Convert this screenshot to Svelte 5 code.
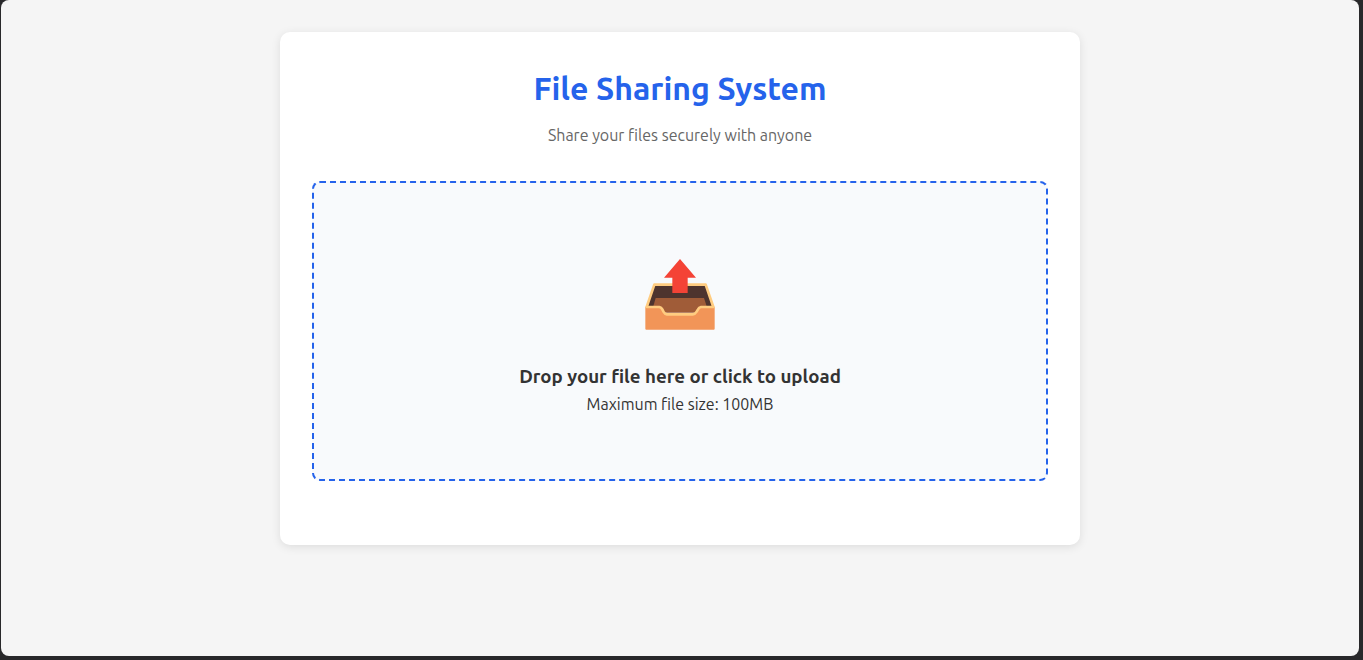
<script>
  let dragging = $state(false);

  function onDragOver(event) {
    event.preventDefault();
    dragging = true;
  }

  function onDrop(event) {
    event.preventDefault();
    dragging = false;
  }
</script>

<div class="page">
  <main class="card">
    <header>
      <h1>File Sharing System</h1>
      <p>Share your files securely with anyone</p>
    </header>

    <div
      class="dropzone"
      class:dragging
      role="group"
      ondragover={onDragOver}
      ondragleave={() => (dragging = false)}
      ondrop={onDrop}
    >
      <svg class="tray" viewBox="45 27 210 216" aria-hidden="true">
        <path d="M74 104H226L248 170H52Z" fill="#4e342e" />
        <path d="M77 144H222L231 172L205 188H95L69 172Z" fill="#a05c38" />
        <path
          d="M46 170H88Q94 171 97 177L101 185Q104 191 111 192H188Q196 191 200 184L204 177Q207 171 213 170H254V236Q254 239 251 239H49Q46 239 46 236Z"
          fill="#f29558"
        />
        <path
          d="M50 171L73 104H227L250 171H213Q207 172 204 178L200 185Q196 192 188 193H111Q104 192 101 186L97 178Q94 172 88 171Z"
          fill="none"
          stroke="#ffcc80"
          stroke-width="8"
          stroke-linejoin="round"
        />
        <path d="M150 27L198 83H173V129H127V83H102Z" fill="#f44336" />
      </svg>
      <h3><label for="file">Drop your file here or click to upload</label></h3>
      <p>Maximum file size: 100MB</p>
      <input id="file" type="file" />
    </div>
  </main>
</div>

<style>
  :global(body) {
    margin: 0;
    background: #28282a;
  }

  .page {
    box-sizing: border-box;
    min-height: calc(100vh - 4px);
    margin: 0 4px 4px 1px;
    padding: 32px;
    border-radius: 8px;
    background: #f5f5f5;
    color: #333;
    font-family: Ubuntu, "Noto Sans", sans-serif;
    font-size: 16px;
    line-height: 26px;
    display: flex;
    justify-content: center;
    align-items: flex-start;
  }

  .card {
    box-sizing: border-box;
    width: 100%;
    max-width: 800px;
    padding: 32px 32px 64px;
    border-radius: 10px;
    background: #fff;
    box-shadow: 0 2px 10px rgba(0, 0, 0, 0.1);
  }

  header {
    margin-bottom: 33px;
    text-align: center;
  }

  h1 {
    margin: 0 0 10px;
    color: #2563eb;
    font-size: 32px;
    font-weight: 600;
    line-height: 48px;
  }

  p {
    margin: 0;
  }

  header p {
    color: #666;
  }

  .dropzone {
    position: relative;
    box-sizing: border-box;
    min-height: 300px;
    padding: 32px;
    border: 2px dashed #2563eb;
    border-radius: 8px;
    background: #f8fafc;
    display: flex;
    flex-direction: column;
    align-items: center;
    justify-content: center;
    text-align: center;
  }

  .dropzone.dragging,
  .dropzone:focus-within {
    background: #eff6ff;
  }

  .tray {
    width: 70px;
    height: 72px;
    margin: 14px 0 32px;
  }

  h3 {
    margin: 0;
    font-weight: 600;
    line-height: 28px;
  }

  /* The label's click area covers the whole drop zone. */
  label::after {
    content: "";
    position: absolute;
    inset: 0;
    cursor: pointer;
  }

  input {
    position: absolute;
    width: 1px;
    height: 1px;
    opacity: 0;
  }
</style>
